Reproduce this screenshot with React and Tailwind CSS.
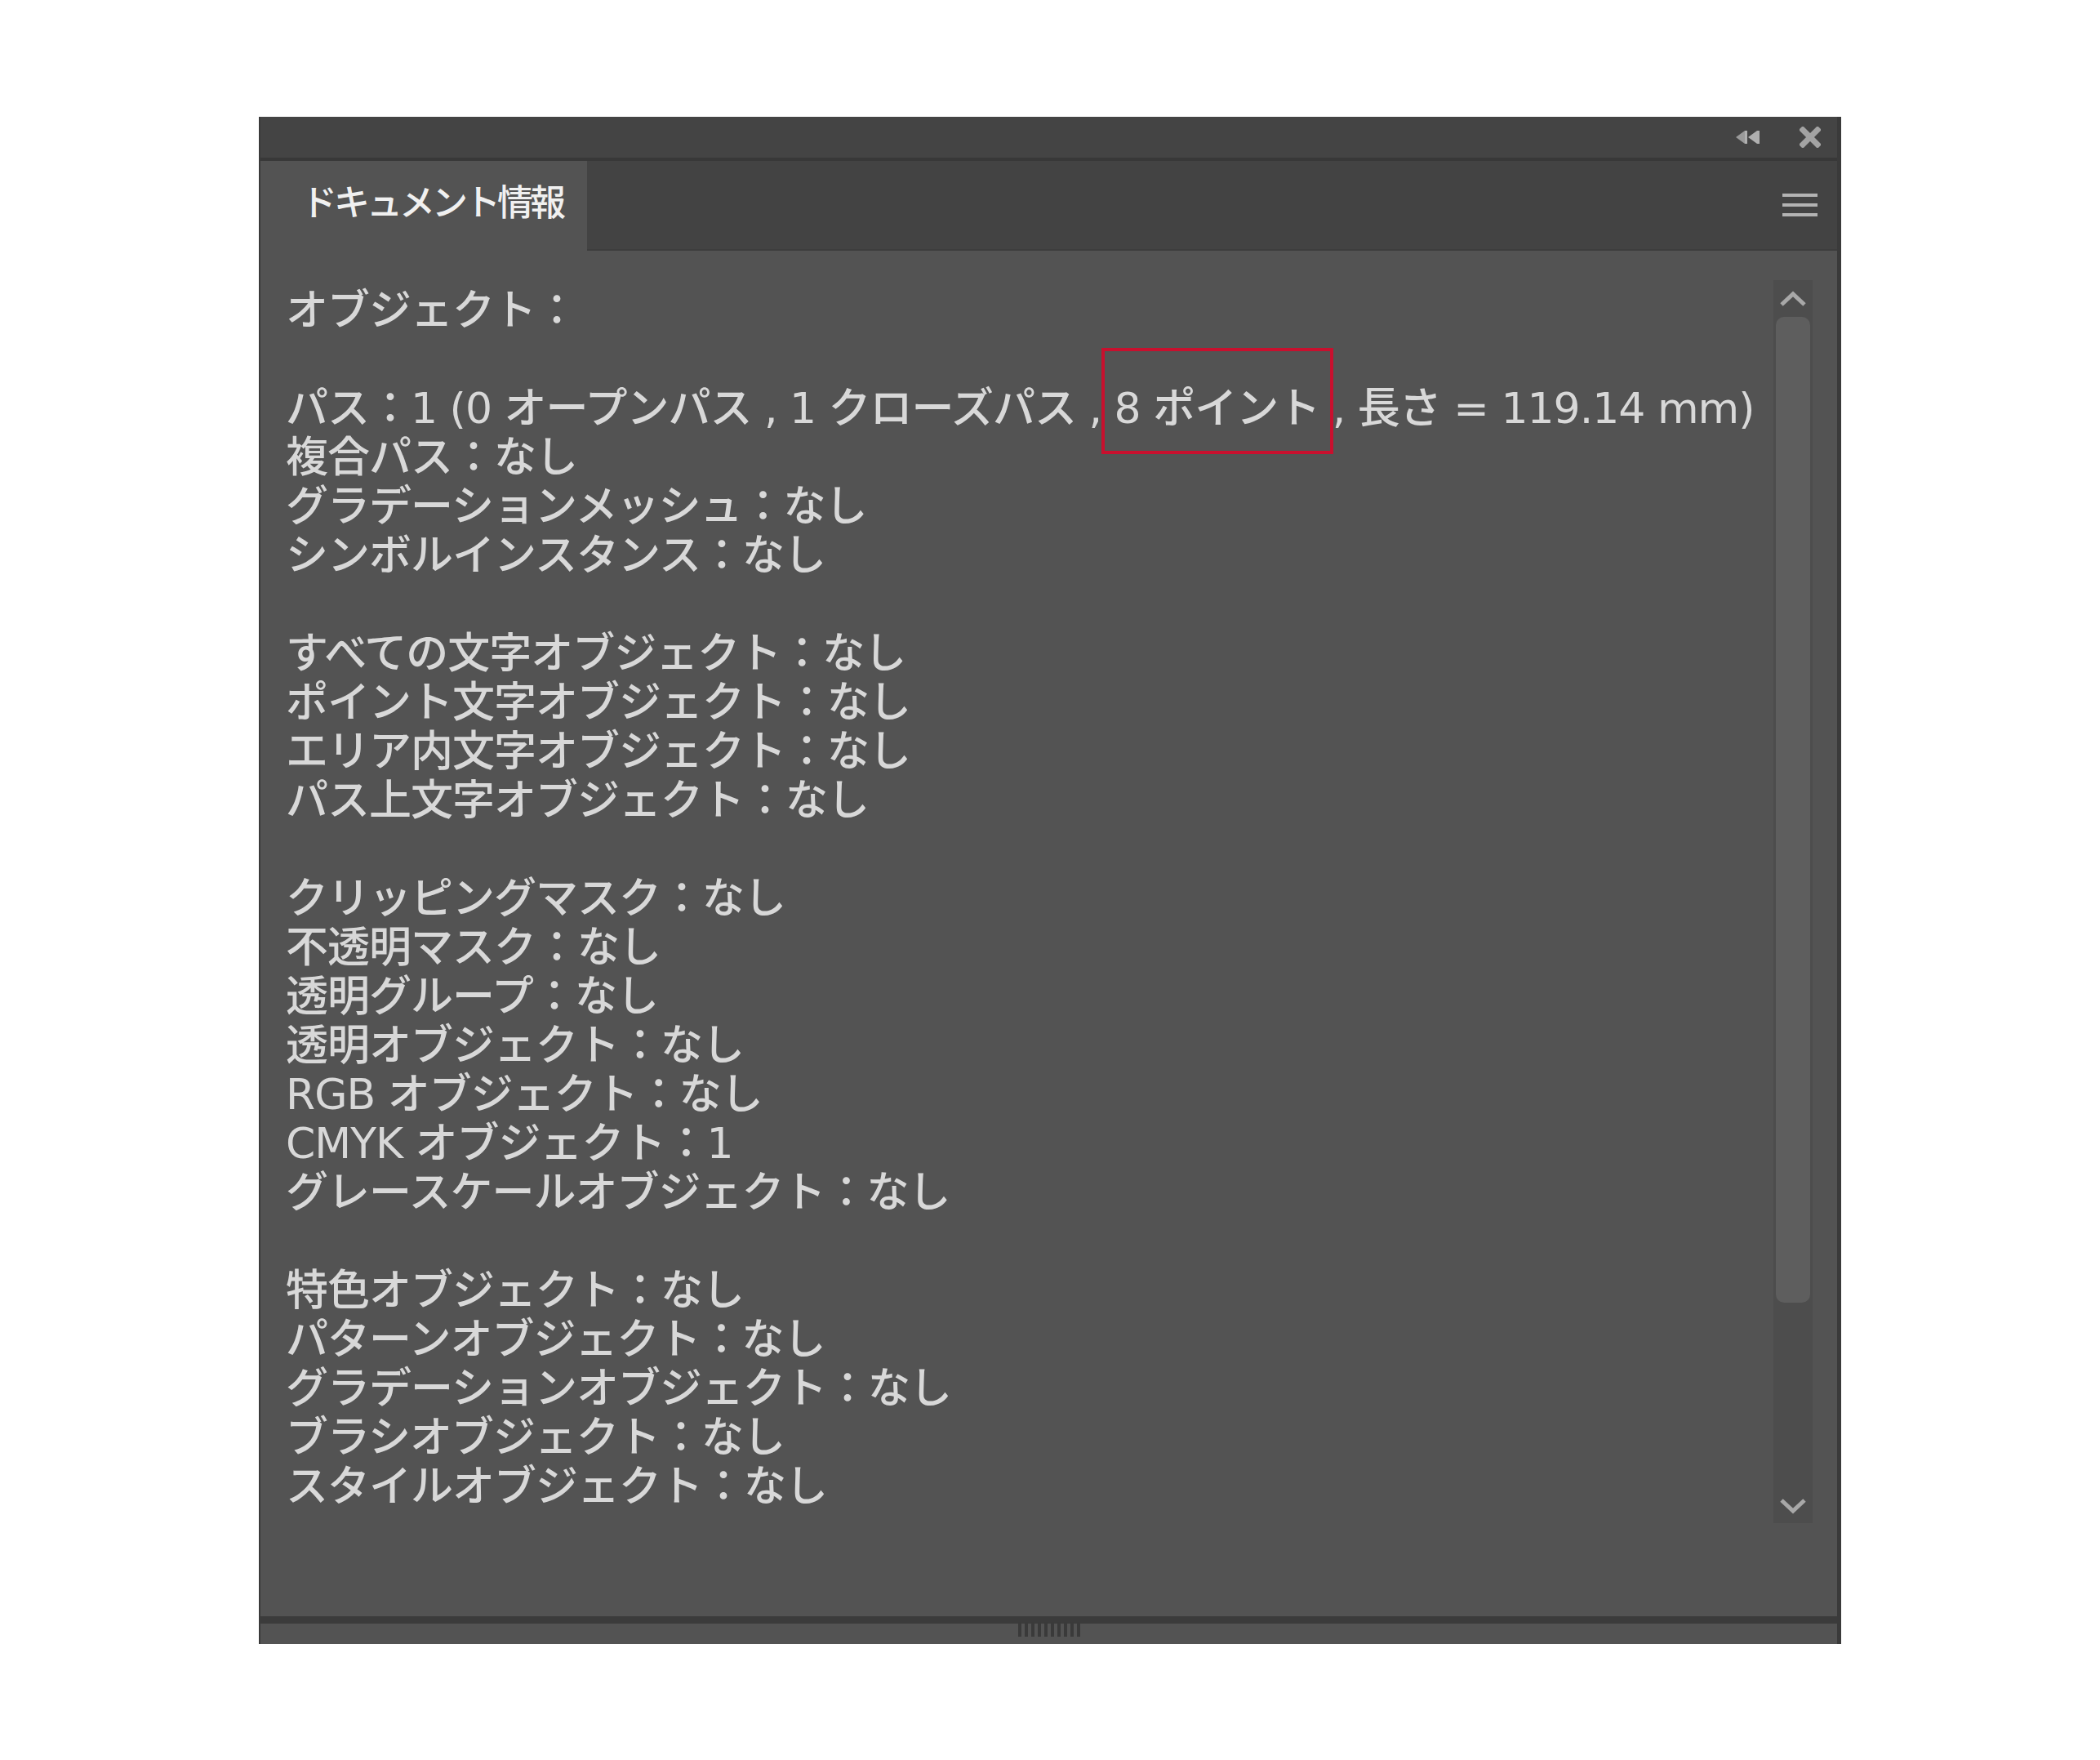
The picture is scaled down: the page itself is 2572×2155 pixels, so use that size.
import React from "react";

const groups = [
  ["オブジェクト："],
  ["__PATH__", "複合パス：なし", "グラデーションメッシュ：なし", "シンボルインスタンス：なし"],
  ["すべての文字オブジェクト：なし", "ポイント文字オブジェクト：なし", "エリア内文字オブジェクト：なし", "パス上文字オブジェクト：なし"],
  ["クリッピングマスク：なし", "不透明マスク：なし", "透明グループ：なし", "透明オブジェクト：なし", "RGB オブジェクト：なし", "CMYK オブジェクト：1", "グレースケールオブジェクト：なし"],
  ["特色オブジェクト：なし", "パターンオブジェクト：なし", "グラデーションオブジェクト：なし", "ブラシオブジェクト：なし", "スタイルオブジェクト：なし"],
];

function PathLine() {
  return (
    <div className="h-[60px] leading-[60px] whitespace-nowrap">
      パス：1 (0 オープンパス , 1 クローズパス ,{" "}
      <span className="relative">
        8 ポイント
        <span className="absolute left-[-16px] right-[-17px] top-[-44px] bottom-[-26px] border-4 border-[#c8102e]"></span>
      </span>
      {" "}, 長さ = 119.14 mm)
    </div>
  );
}

function CollapseIcon() {
  return (
    <svg width="30" height="22" viewBox="0 0 30 22">
      <polygon points="1,11 12,3 12,19" fill="#9a9a9a" />
      <polygon points="16,11 27,3 27,19" fill="#b0b0b0" />
      <rect x="12" y="3" width="3" height="16" fill="#b0b0b0" />
      <rect x="27" y="3" width="3" height="16" fill="#b0b0b0" />
    </svg>
  );
}

function CloseIcon() {
  return (
    <svg width="26" height="26" viewBox="0 0 26 26">
      <path d="M4 4 L22 22 M22 4 L4 22" stroke="#a3a3a3" strokeWidth="7" strokeLinecap="square" />
    </svg>
  );
}

function Chevron({ up }) {
  return (
    <svg width="36" height="22" viewBox="0 0 36 22">
      <path d={up ? "M4 18 L18 5 L32 18" : "M4 4 L18 17 L32 4"} stroke="#a8a8a8" strokeWidth="5" fill="none" />
    </svg>
  );
}

export default function App() {
  return (
    <div className="w-[2572px] h-[2155px] bg-white pt-[143px] pl-[317px] font-['Noto_Sans_CJK_JP',sans-serif]">
      <div className="w-[1938px] h-[1870px] flex flex-col border-l-2 border-r-[5px] border-[#3a3a3a] bg-[#535353]">
        {/* title bar */}
        <div className="h-[50px] bg-[#444444] flex items-center justify-end pr-[20px] gap-[49px]">
          <CollapseIcon />
          <CloseIcon />
        </div>
        <div className="h-[4px] bg-[#383838]"></div>
        {/* tab bar */}
        <div className="h-[110px] flex bg-[#434343]">
          <div className="w-[400px] bg-[#535353] flex items-center pl-[50px] pb-[14px] text-[44px] font-medium tracking-[-4px] text-[#f0f0f0]">
            ドキュメント情報
          </div>
          <div className="flex-1 flex items-center justify-end pr-[24px] border-b-2 border-[#3d3d3d]">
            <div className="flex flex-col gap-[8px]">
              <div className="w-[43px] h-[4px] bg-[#b3b3b3]"></div>
              <div className="w-[43px] h-[4px] bg-[#b3b3b3]"></div>
              <div className="w-[43px] h-[4px] bg-[#b3b3b3]"></div>
            </div>
          </div>
        </div>
        {/* content */}
        <div className="flex-1 flex">
          <div className="flex-1 pl-[31px] pt-[43px] text-[52px] font-medium tracking-[-1px] text-[#d8d8d8] font-['DejaVu_Sans','Noto_Sans_CJK_JP',sans-serif]">
            {groups.map((g, gi) => (
              <div key={gi} className={gi > 0 ? "mt-[60px]" : ""}>
                {g.map((t, i) =>
                  t === "__PATH__" ? (
                    <PathLine key={i} />
                  ) : (
                    <div key={i} className="h-[60px] leading-[60px] whitespace-nowrap">{t}</div>
                  )
                )}
              </div>
            ))}
          </div>
          <div className="w-[48px] mr-[30px] mt-[36px] h-[1522px] bg-[#4d4d4d] flex flex-col items-center">
            <div className="h-[45px] flex items-center justify-center">
              <Chevron up />
            </div>
            <div className="w-[42px] h-[1207px] bg-[#5e5e5e] rounded-t-[10px] rounded-b-[10px]"></div>
            <div className="flex-1 flex items-end justify-center pb-[10px]">
              <Chevron />
            </div>
          </div>
        </div>
        <div className="h-[9px] bg-[#3b3b3b]"></div>
        <div className="h-[25px] flex justify-center">
          <div className="flex gap-[4px] -mt-[2px]">
            {Array.from({ length: 10 }).map((_, i) => (
              <div key={i} className="w-[4px] h-[18px] bg-[#3a3a3a]"></div>
            ))}
          </div>
        </div>
      </div>
    </div>
  );
}
